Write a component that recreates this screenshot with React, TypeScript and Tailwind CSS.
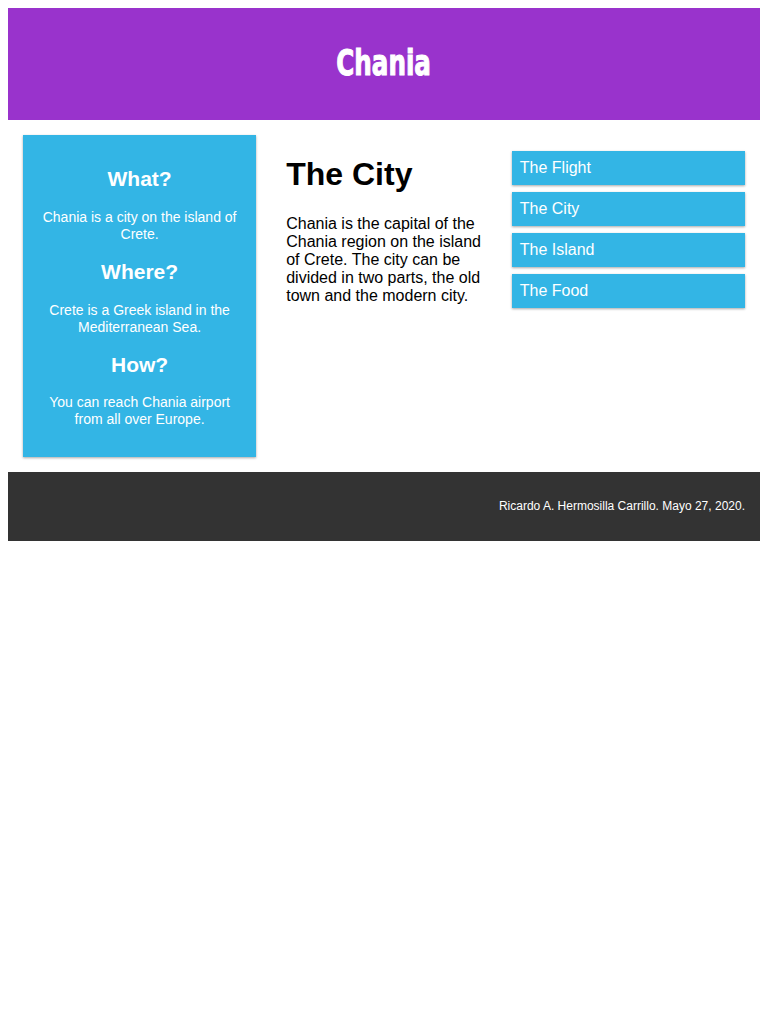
const CARD_SHADOW = "shadow-[0_1px_3px_rgba(0,0,0,0.12),0_1px_2px_rgba(0,0,0,0.24)]";

const FACTS = [
  { q: "What?", a: "Chania is a city on the island of Crete." },
  { q: "Where?", a: "Crete is a Greek island in the Mediterranean Sea." },
  { q: "How?", a: "You can reach Chania airport from all over Europe." },
];

const MENU = ["The Flight", "The City", "The Island", "The Food"];

export default function App() {
  return (
    <div className="p-2 bg-white text-black leading-[normal] font-['Liberation_Sans',Arial,sans-serif] text-[16px]">
      {/* Header */}
      <header className="bg-[#9933cc] text-white text-center p-[15px]">
        <h1 className="my-[21.44px] h-[39px] text-[35px] leading-[39px] font-bold font-['DejaVu_Sans_Condensed','DejaVu_Sans',sans-serif] [-webkit-text-stroke:1px_white]">
          <span className="inline-block scale-x-[0.78] align-top">Chania</span>
        </h1>
      </header>

      {/* Main row */}
      <div className="flex items-start">
        <div className="w-[35%] p-[15px]">
          <div className={`bg-[#33b5e5] text-white text-center text-[14px] p-[15px] ${CARD_SHADOW}`}>
            {FACTS.map((f) => (
              <div key={f.q}>
                <h2 className="text-[21px] font-bold my-[17.43px]">{f.q}</h2>
                <p className="my-[14px] leading-[17px]">{f.a}</p>
              </div>
            ))}
          </div>
        </div>

        <div className="w-[30%] p-[15px]">
          <h1 className="text-[32px] font-bold my-[21.44px]">The City</h1>
          <p className="my-[16px]">
            Chania is the capital of the Chania region on the island of Crete. The city can be divided in two parts, the old town and the modern city.
          </p>
        </div>

        <div className="w-[35%] p-[15px]">
          <ul className="mt-[16px] flex flex-col gap-[7px]">
            {MENU.map((m) => (
              <li key={m} className={`bg-[#33b5e5] text-white p-[8px] ${CARD_SHADOW}`}>
                {m}
              </li>
            ))}
          </ul>
        </div>
      </div>

      {/* Footer */}
      <footer className="bg-[#333333] text-white text-right text-[12px] p-[15px]">
        <p className="my-[12px] leading-[15px]">Ricardo A. Hermosilla Carrillo. Mayo 27, 2020.</p>
      </footer>
    </div>
  );
}
